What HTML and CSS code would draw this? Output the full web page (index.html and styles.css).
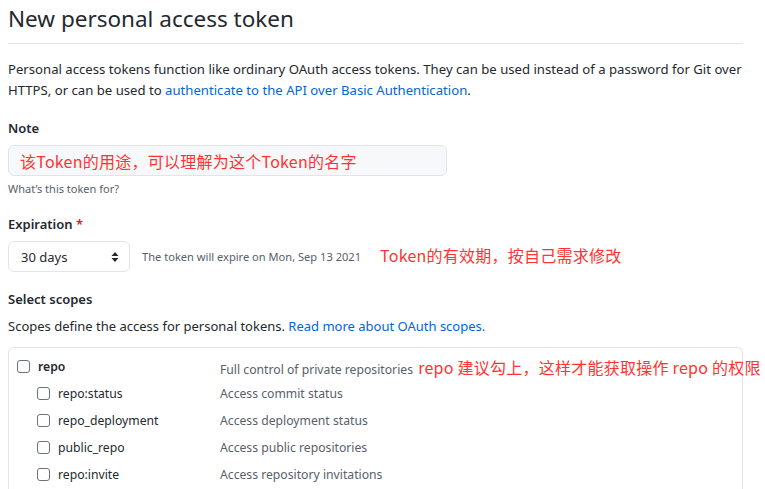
FILE: index.html
```html
<!DOCTYPE html>
<html lang="zh-CN">
<head>
<meta charset="utf-8">
<title>New personal access token</title>
<link rel="stylesheet" href="styles.css">
</head>
<body>
<main class="page">
  <h1 class="title">New personal access token</h1>
  <p class="intro">Personal access tokens function like ordinary OAuth access tokens. They can be used instead of a password for Git over HTTPS, or can be used to <a href="#" class="link">authenticate to the API over Basic Authentication</a>.</p>

  <section class="field">
    <label class="label">Note</label>
    <div class="input"><span class="note-text">该Token的用途，可以理解为这个Token的名字</span></div>
    <p class="hint">What’s this token for?</p>
  </section>

  <section class="field">
    <label class="label">Expiration <span class="req">*</span></label>
    <div class="exp-row">
      <div class="select">
        <span>30 days</span>
        <svg class="updown" width="8" height="12" viewBox="0 0 8 12"><path d="M4 1 L7.5 5 H0.5 Z" fill="#24292e"/><path d="M4 11 L7.5 7 H0.5 Z" fill="#24292e"/></svg>
      </div>
      <span class="exp-note">The token will expire on Mon, Sep 13 2021</span>
      <span class="anno anno-exp">Token的有效期，按自己需求修改</span>
    </div>
  </section>

  <section class="field">
    <label class="label">Select scopes</label>
    <p class="scopes-desc">Scopes define the access for personal tokens. <a href="#" class="link">Read more about OAuth scopes.</a></p>
    <div class="scope-box">
      <div class="row">
        <div class="name main"><span class="cb"></span><span class="bold">repo</span></div>
        <div class="desc">Full control of private repositories <span class="anno anno-repo">repo 建议勾上，这样才能获取操作 repo 的权限</span></div>
      </div>
      <div class="row">
        <div class="name sub"><span class="cb"></span><span>repo:status</span></div>
        <div class="desc">Access commit status</div>
      </div>
      <div class="row">
        <div class="name sub"><span class="cb"></span><span>repo_deployment</span></div>
        <div class="desc">Access deployment status</div>
      </div>
      <div class="row">
        <div class="name sub"><span class="cb"></span><span>public_repo</span></div>
        <div class="desc">Access public repositories</div>
      </div>
      <div class="row">
        <div class="name sub"><span class="cb"></span><span>repo:invite</span></div>
        <div class="desc">Access repository invitations</div>
      </div>
    </div>
  </section>
</main>
</body>
</html>
```
FILE: styles.css
```css
* { box-sizing: border-box; }
html, body { margin: 0; padding: 0; background: #fff; overflow: hidden; }
body {
  font-family: "Noto Sans", "Open Sans", "Noto Sans CJK SC", sans-serif;
  color: #24292e;
  font-size: 13px;
}
.page {
  width: 735px;
  margin-left: 8px;
}
.title {
  margin: 0;
  padding-top: 3px;
  font-size: 22.5px;
  font-weight: 400;
  line-height: 32px;
  padding-bottom: 8px;
  border-bottom: 1px solid #e1e4e8;
}
.intro {
  margin: 15px 0 0;
  line-height: 21px;
  font-size: 13.15px;
}
.link { color: #0366d6; text-decoration: none; }
.field { margin-top: 17px; }
.label {
  display: block;
  font-weight: 600;
  font-size: 13px;
  line-height: 20px;
  margin-bottom: 7px;
}
.req { color: #cb2431; }
.input {
  width: 439px;
  height: 31px;
  background: #f6f8fa;
  border: 1px solid #e1e4e8;
  border-radius: 6px;
  display: flex;
  align-items: center;
  padding-left: 11px;
}
.anno, .note-text {
  font-family: "Noto Sans CJK SC", sans-serif;
  color: #ff3333;
  font-size: 16px;
  letter-spacing: 0.25px;
  white-space: nowrap;
}
.hint {
  margin: 5px 0 0;
  font-size: 11px;
  color: #586069;
  line-height: 16px;
}
.exp-row {
  display: flex;
  align-items: center;
}
.select {
  width: 122px;
  height: 31px;
  border: 1px solid #e1e4e8;
  border-radius: 6px;
  display: flex;
  align-items: center;
  justify-content: space-between;
  padding: 0 10px 0 12px;
  font-size: 13px;
}
.exp-note {
  margin-left: 12px;
  font-size: 11.1px;
  color: #586069;
}
.anno-exp { margin-left: 19px; margin-top: -4px; }
.scopes-desc {
  margin: 0;
  line-height: 20px;
}
.scope-box {
  margin-top: 11px;
  border: 1px solid #e1e4e8;
  border-bottom: none;
  border-radius: 6px 6px 0 0;
  padding: 5px 0 0 8px;
  height: 150px;
  font-size: 12.2px;
}
.row {
  display: flex;
  align-items: center;
  height: 27px;
}
.name {
  width: 203px;
  flex: none;
  display: flex;
  align-items: center;
  gap: 8px;
}
.name.sub { padding-left: 20px; }
.bold { font-weight: 600; }
.cb {
  width: 13px;
  height: 13px;
  border: 1px solid #6a737d;
  border-radius: 3px;
  background: #fff;
  flex: none;
}
.desc {
  color: #586069;
  white-space: nowrap;
}
.anno-repo { margin-left: 2px; }
```
